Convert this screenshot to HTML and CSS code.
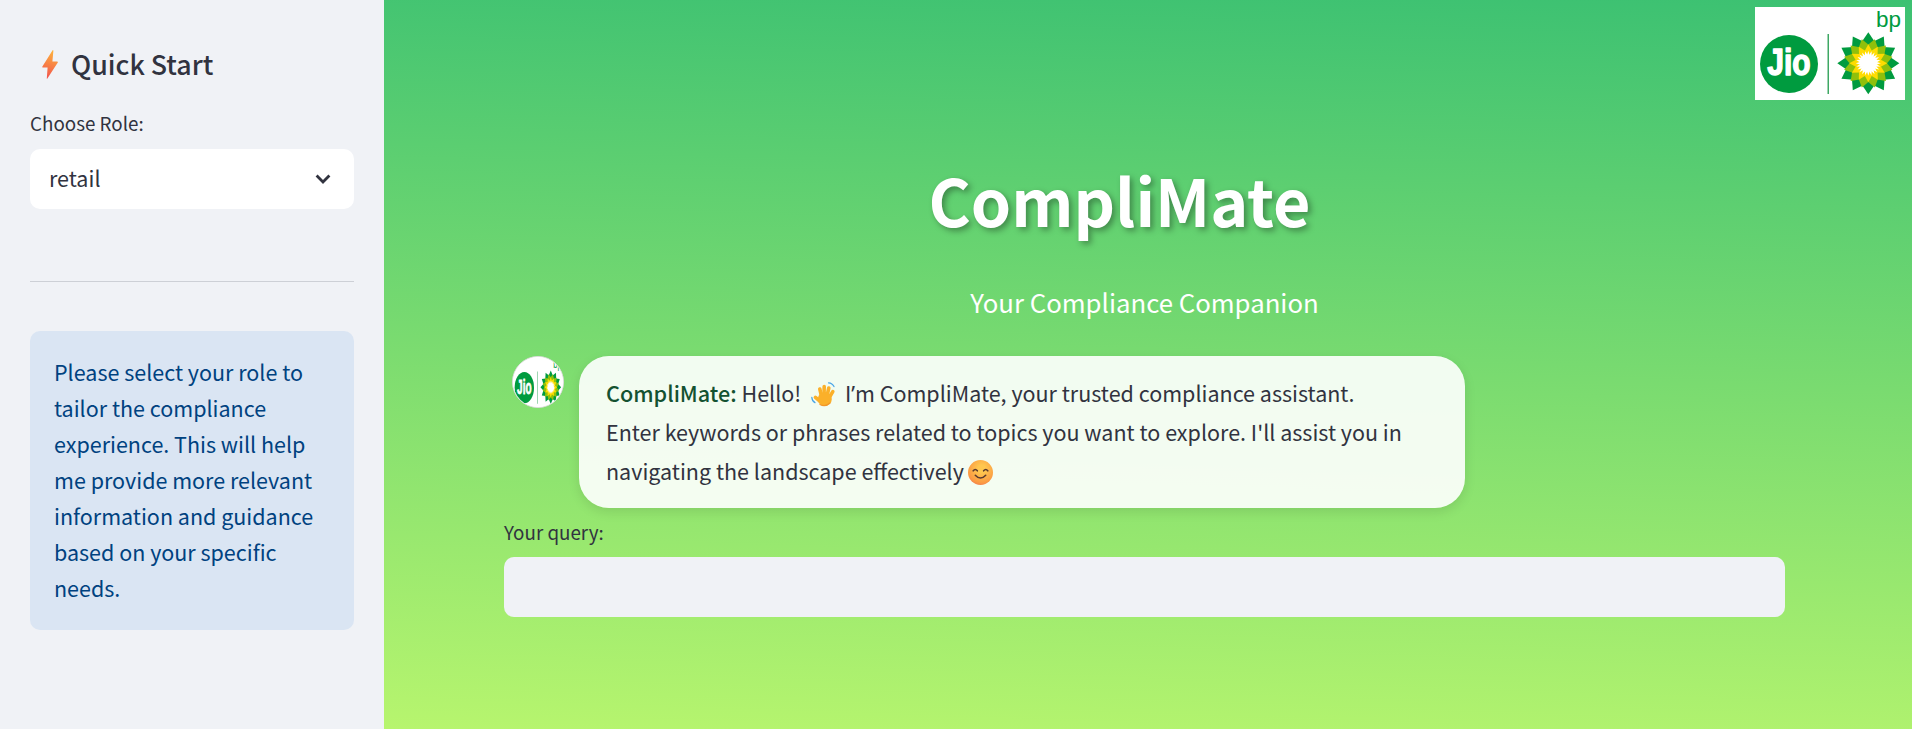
FILE: index.html
```html
<!DOCTYPE html>
<html lang="en">

<head>
    <meta charset="UTF-8">
    <meta name="viewport" content="width=device-width, initial-scale=1.0">
    <title>CompliMate</title>
    <link rel="stylesheet" href="styles.css">
</head>

<body>
    <aside class="sidebar">
        <h3 class="side-title">
            <svg class="bolt" viewBox="0 0 16 29">
                <defs>
                    <linearGradient id="bolt-fill" x1="0.6" y1="0" x2="0.4" y2="1">
                        <stop offset="0" stop-color="#fdb23c" />
                        <stop offset="1" stop-color="#f2544e" />
                    </linearGradient>
                </defs>
                <path d="M10.6 0.3 L0.4 16.4 Q0 17.4 1 17.4 L5.6 17.4 L4.8 28.4 Q4.8 29 5.4 28.4 L15.8 12.4 Q16.2 11.6 15.2 11.6 L10.4 11.6 L11.4 0.6 Q11 -0.2 10.6 0.3 Z" fill="url(#bolt-fill)" />
            </svg>
            Quick Start
        </h3>
        <label class="field-label">Choose Role:</label>
        <div class="select-box">
            <span>retail</span>
            <svg class="chevron" viewBox="0 0 16 10"><path d="M1.6 1.6 L8 8 L14.4 1.6" /></svg>
        </div>
        <hr class="divider">
        <div class="info-box">Please select your role to tailor the compliance experience. This will help me provide more relevant information and guidance based on your specific needs.</div>
    </aside>

    <main class="main">
        <!-- jio-bp logo, the avatar re-uses the same drawing -->
        <svg class="logo" viewBox="0 0 150 93">
            <defs>
                <polygon id="p-dark" points="0,-31 6.8,-21 0,-9 -6.8,-21" fill="#009b3f" />
                <polygon id="p-lime" points="0,-25 6,-16.5 0,-6 -6,-16.5" fill="#8fc00c" />
                <polygon id="p-yellow" points="0,-19 3.8,-12 0,-3 -3.8,-12" fill="#ffdc00" />
                <polygon id="p-white" points="0,-12.5 1.7,-7 0,-2 -1.7,-7" fill="#fff" />
                <g id="quarter-dark">
                    <use href="#p-dark" />
                    <use href="#p-dark" transform="rotate(30)" />
                    <use href="#p-dark" transform="rotate(60)" />
                </g>
                <g id="quarter-lime">
                    <use href="#p-lime" transform="rotate(15)" />
                    <use href="#p-lime" transform="rotate(45)" />
                    <use href="#p-lime" transform="rotate(75)" />
                </g>
                <g id="quarter-yellow">
                    <use href="#p-yellow" />
                    <use href="#p-yellow" transform="rotate(30)" />
                    <use href="#p-yellow" transform="rotate(60)" />
                </g>
                <g id="quarter-white">
                    <use href="#p-white" />
                    <use href="#p-white" transform="rotate(15)" />
                    <use href="#p-white" transform="rotate(30)" />
                    <use href="#p-white" transform="rotate(45)" />
                    <use href="#p-white" transform="rotate(60)" />
                    <use href="#p-white" transform="rotate(75)" />
                </g>
                <g id="helios">
                    <use href="#quarter-dark" />
                    <use href="#quarter-dark" transform="rotate(90)" />
                    <use href="#quarter-dark" transform="rotate(180)" />
                    <use href="#quarter-dark" transform="rotate(270)" />
                    <circle r="17" fill="#a8cc10" />
                    <use href="#quarter-lime" />
                    <use href="#quarter-lime" transform="rotate(90)" />
                    <use href="#quarter-lime" transform="rotate(180)" />
                    <use href="#quarter-lime" transform="rotate(270)" />
                    <use href="#quarter-yellow" />
                    <use href="#quarter-yellow" transform="rotate(90)" />
                    <use href="#quarter-yellow" transform="rotate(180)" />
                    <use href="#quarter-yellow" transform="rotate(270)" />
                    <use href="#quarter-white" />
                    <use href="#quarter-white" transform="rotate(90)" />
                    <use href="#quarter-white" transform="rotate(180)" />
                    <use href="#quarter-white" transform="rotate(270)" />
                    <circle r="7.5" fill="#fff" />
                </g>
                <g id="logo-art">
                    <rect width="150" height="93" fill="#fff" />
                    <circle cx="34" cy="57" r="29" fill="#009b3f" />
                    <text class="logo-jio" transform="translate(34 68) scale(1 1.2)" text-anchor="middle">Jio</text>
                    <rect x="72.5" y="27" width="1.5" height="60" fill="#3fa864" />
                    <use href="#helios" x="113.3" y="56.3" />
                    <text class="logo-bp" x="121" y="20">bp</text>
                </g>
            </defs>
            <use href="#logo-art" />
        </svg>

        <div class="content">
            <h1 class="app-title">CompliMate</h1>
            <p class="app-sub">Your Compliance Companion</p>

            <div class="chat-row">
                <div class="avatar">
                    <svg viewBox="0 0 150 93" preserveAspectRatio="none"><use href="#logo-art" /></svg>
                </div>
                <div class="bubble">
                    <strong>CompliMate:</strong> Hello!
                    <svg class="emoji hand" viewBox="0 0 26 25">
                        <g fill="none" stroke="#fbb02a" stroke-width="3.6" stroke-linecap="round">
                            <path d="M10.5 14 L8.8 7" />
                            <path d="M13 14 L13.2 4.6" />
                            <path d="M16 14 L17.8 6" />
                            <path d="M18 16 L21.8 9.6" />
                            <path d="M10 20 L4.4 15.4" />
                        </g>
                        <circle cx="13.8" cy="17" r="7" fill="#fbb02a" />
                        <path d="M9 22.4 Q14 25.4 19 21" fill="none" stroke="#f2972a" stroke-width="1.2" stroke-linecap="round" />
                        <path d="M17.5 0.8 Q21.4 1 23 4.6 M0.8 15.4 Q1 19 4 20.6" fill="none" stroke="#4aa5e6" stroke-width="1.2" stroke-linecap="round" />
                    </svg>
                    I<span class="apos">’</span>m CompliMate, your trusted compliance assistant.<br>
                    Enter keywords or phrases related to topics you want to explore. I'll assist you in navigating the landscape effectively<svg class="emoji smile" viewBox="0 0 24 24">
                        <defs>
                            <radialGradient id="smile-fill" cx="0.55" cy="0.35" r="0.75">
                                <stop offset="0.2" stop-color="#ffc74f" />
                                <stop offset="0.75" stop-color="#fb9a43" />
                                <stop offset="1" stop-color="#ee6f55" />
                            </radialGradient>
                        </defs>
                        <circle cx="12" cy="12" r="12" fill="url(#smile-fill)" />
                        <g fill="none" stroke="#5b3a2e" stroke-width="1.5" stroke-linecap="round">
                            <path d="M5 10.4 Q7 7.8 9 10.4" />
                            <path d="M15 10.4 Q17 7.8 19 10.4" />
                            <path d="M7 14.6 Q12 20 17 14.6" />
                        </g>
                    </svg>
                </div>
            </div>

            <label class="field-label query-label">Your query:</label>
            <div class="query-input"></div>
        </div>
    </main>
</body>

</html>
```

FILE: styles.css
```css
* {
    box-sizing: border-box;
}

html,
body {
    height: 100%;
}

body {
    margin: 0;
    display: flex;
    overflow: hidden;
    font-family: "Noto Sans CJK SC", "Noto Sans", sans-serif;
    color: #31333f;
}

.sidebar {
    width: 384px;
    flex-shrink: 0;
    padding: 44px 30px 0;
    background: #f0f2f6;
}

.side-title {
    display: flex;
    align-items: center;
    gap: 13px;
    height: 40px;
    margin: 0 0 25px;
    padding-left: 12px;
    font-size: 26.8px;
    line-height: 40px;
    font-weight: 500;
}

.bolt {
    width: 16px;
    height: 29px;
    flex-shrink: 0;
}

.field-label {
    display: block;
    font-size: 18.8px;
    line-height: 28px;
}

.select-box {
    display: flex;
    align-items: center;
    justify-content: space-between;
    height: 60px;
    margin-top: 12px;
    padding: 0 23px 4px 19px;
    background: #fff;
    border-radius: 10px;
    font-size: 21.5px;
}

.chevron {
    width: 16px;
    height: 10px;
    margin-top: 4px;
    fill: none;
    stroke: #31333f;
    stroke-width: 2.8;
}

.divider {
    height: 1px;
    margin: 72px 0 49px;
    border: 0;
    background: #cdd0d6;
}

.info-box {
    padding: 23px 24px 24px;
    background: #dae5f3;
    border-radius: 10px;
    color: #004280;
    font-size: 21.5px;
    line-height: 36px;
}

.main {
    flex: 1;
    position: relative;
    background: linear-gradient(182deg, #3cc172 0%, #b7f56e 100%);
}

.logo {
    position: absolute;
    top: 7px;
    right: 7px;
    width: 150px;
    height: 93px;
}

.logo-jio {
    font-family: "Liberation Sans", sans-serif;
    font-size: 30px;
    font-weight: 700;
    fill: #fff;
    stroke: #fff;
    stroke-width: 1.2;
    stroke-linejoin: round;
}

.logo-bp {
    font-family: "Liberation Sans", sans-serif;
    font-size: 22.5px;
    fill: #009b3f;
}

.content {
    width: 1281px;
    margin-left: 120px;
    padding-top: 151px;
}

.app-title {
    margin: 0;
    padding-right: 50px;
    text-align: center;
    font-size: 64.6px;
    line-height: 96px;
    font-weight: 700;
    color: #fff;
    text-shadow: 3px 3px 6px rgba(0, 0, 0, 0.35);
}

.app-sub {
    margin: 37px 0 0;
    text-align: center;
    font-size: 25.75px;
    line-height: 36px;
    color: #fff;
}

.chat-row {
    display: flex;
    align-items: flex-start;
    gap: 15px;
    margin: 36px 0 0 8px;
}

.avatar {
    width: 52px;
    height: 52px;
    flex-shrink: 0;
    overflow: hidden;
    border: 1px solid #ddd;
    border-radius: 50%;
    background: #fff;
}

.avatar svg {
    display: block;
    width: 100%;
    height: 100%;
}

.bubble {
    width: 886px;
    padding: 18px 27px;
    background: rgba(255, 255, 255, 0.9);
    border-radius: 30px;
    box-shadow: 0 4px 12px rgba(0, 0, 0, 0.1);
    font-size: 21.5px;
    line-height: 38.4px;
}

.bubble strong {
    font-size: 21.6px;
    font-weight: 500;
    color: #145231;
}

.apos {
    font-family: "Noto Sans", sans-serif;
}

.emoji {
    display: inline-block;
    vertical-align: -5px;
}

.hand {
    width: 26px;
    height: 25px;
    margin: 0 3px 0 5px;
}

.smile {
    width: 25px;
    height: 25px;
    margin-left: 4px;
}

.query-label {
    margin-top: 10px;
}

.query-input {
    height: 60px;
    margin-top: 11px;
    background: #f0f2f6;
    border-radius: 10px;
}
```
